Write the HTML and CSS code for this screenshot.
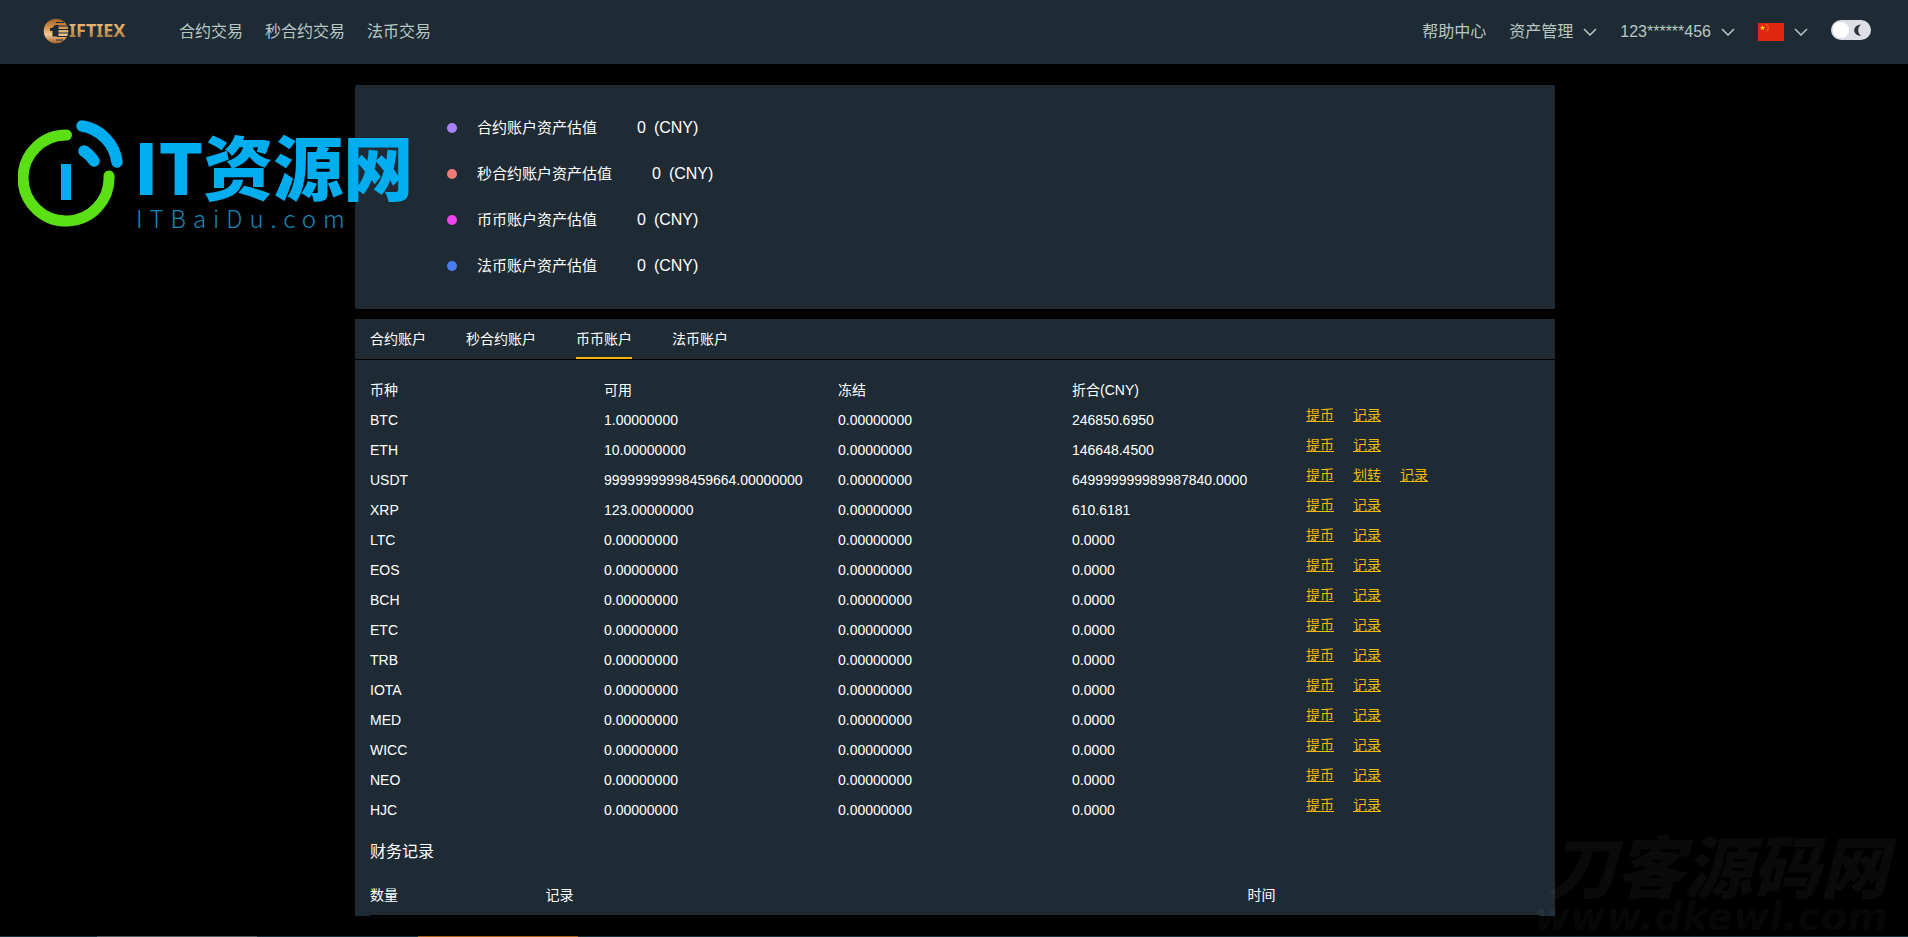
FILE: index.html
```html
<!DOCTYPE html>
<html lang="zh-CN">
<head>
<meta charset="utf-8">
<meta name="viewport" content="width=device-width, initial-scale=1">
<title>IFTIEX</title>
<link rel="stylesheet" href="styles.css">
</head>
<body>
<header class="header">
  <a class="brand" href="#" aria-label="IFTIEX">
    <svg width="84" height="26" viewBox="0 0 84 26">
      <defs>
        <linearGradient id="gold" x1="0" y1="0" x2="0" y2="1"><stop offset="0" stop-color="#efc780"/><stop offset=".5" stop-color="#d9a45c"/><stop offset="1" stop-color="#8c6135"/></linearGradient>
        <linearGradient id="coin" x1="0" y1="0" x2="0" y2="1"><stop offset="0" stop-color="#9a602e"/><stop offset=".3" stop-color="#d08a42"/><stop offset=".65" stop-color="#f3c98e"/><stop offset="1" stop-color="#a3632c"/></linearGradient>
      </defs>
      <circle cx="13" cy="13" r="12.300" fill="url(#coin)"/>
      <path d="M7 10h2l3-3h3.500v11.500H9.500V13H7z" fill="#1f2b34"/>
      <path d="M13 4.500h8M14 8h10M14 11.500h12M14 15h12M14 18.500h10M13 22h7" stroke="#1f2b34" stroke-width="1.200"/>
      <text class="brand-text" x="26" y="19" fill="url(#gold)">IFTIEX</text>
    </svg>
  </a>
  <nav class="nav">
    <a href="#">合约交易</a>
    <a href="#">秒合约交易</a>
    <a href="#">法币交易</a>
  </nav>
  <div class="tools">
    <a href="#">帮助中心</a>
    <button type="button">资产管理<svg class="chev" width="14" height="8" viewBox="0 0 14 8"><path d="M1 1l6 6 6-6"/></svg></button>
    <button type="button">123******456<svg class="chev" width="14" height="8" viewBox="0 0 14 8"><path d="M1 1l6 6 6-6"/></svg></button>
    <button class="lang" type="button" aria-label="语言"><svg width="26" height="18" viewBox="0 0 26 18"><path fill="#de2910" d="M0 0h26v18H0z"/><path fill="#ffde00" d="M4.500 2.300l.7 1.700 1.800.1-1.400 1.100.5 1.800-1.600-1-1.500 1 .4-1.800L2 4.100l1.800-.1z"/><path fill="none" stroke="#e8820c" stroke-width="1.300" stroke-dasharray="1.500 1.200" d="M8 1.500c3 1.500 3 5 0 7"/></svg><svg class="chev" width="14" height="8" viewBox="0 0 14 8"><path d="M1 1l6 6 6-6"/></svg></button>
    <label class="switch">
      <input type="checkbox" aria-label="夜间模式">
      <svg width="40" height="20" viewBox="0 0 40 20"><rect width="40" height="20" rx="10" fill="#dcdfe6"/><circle cx="10" cy="10" r="8" fill="#fff"/><path d="M30 4.500c-9 1-9 10.500 0 11.500-3.700-3-3.700-8.500 0-11.500z" fill="#303133"/></svg>
    </label>
  </div>
</header>

<main class="main">
  <section class="card summary">
    <dl>
      <div class="sum"><dt class="violet">合约账户资产估值</dt><dd><span>0</span><span>(CNY)</span></dd></div>
      <div class="sum"><dt class="coral">秒合约账户资产估值</dt><dd><span>0</span><span>(CNY)</span></dd></div>
      <div class="sum"><dt class="pink">币币账户资产估值</dt><dd><span>0</span><span>(CNY)</span></dd></div>
      <div class="sum"><dt class="blue">法币账户资产估值</dt><dd><span>0</span><span>(CNY)</span></dd></div>
    </dl>
  </section>

  <section class="card">
    <div class="tabs">
      <button type="button">合约账户</button>
      <button type="button">秒合约账户</button>
      <button type="button" class="active">币币账户</button>
      <button type="button">法币账户</button>
    </div>
    <div class="body">
      <table class="assets">
        <thead><tr><th>币种</th><th>可用</th><th>冻结</th><th>折合(CNY)</th><th></th></tr></thead>
        <tbody>
          <tr><td>BTC</td><td>1.00000000</td><td>0.00000000</td><td>246850.6950</td><td class="ops"><a href="#">提币</a><a href="#">记录</a></td></tr>
          <tr><td>ETH</td><td>10.00000000</td><td>0.00000000</td><td>146648.4500</td><td class="ops"><a href="#">提币</a><a href="#">记录</a></td></tr>
          <tr><td>USDT</td><td>99999999998459664.00000000</td><td>0.00000000</td><td>649999999989987840.0000</td><td class="ops"><a href="#">提币</a><a href="#">划转</a><a href="#">记录</a></td></tr>
          <tr><td>XRP</td><td>123.00000000</td><td>0.00000000</td><td>610.6181</td><td class="ops"><a href="#">提币</a><a href="#">记录</a></td></tr>
          <tr><td>LTC</td><td>0.00000000</td><td>0.00000000</td><td>0.0000</td><td class="ops"><a href="#">提币</a><a href="#">记录</a></td></tr>
          <tr><td>EOS</td><td>0.00000000</td><td>0.00000000</td><td>0.0000</td><td class="ops"><a href="#">提币</a><a href="#">记录</a></td></tr>
          <tr><td>BCH</td><td>0.00000000</td><td>0.00000000</td><td>0.0000</td><td class="ops"><a href="#">提币</a><a href="#">记录</a></td></tr>
          <tr><td>ETC</td><td>0.00000000</td><td>0.00000000</td><td>0.0000</td><td class="ops"><a href="#">提币</a><a href="#">记录</a></td></tr>
          <tr><td>TRB</td><td>0.00000000</td><td>0.00000000</td><td>0.0000</td><td class="ops"><a href="#">提币</a><a href="#">记录</a></td></tr>
          <tr><td>IOTA</td><td>0.00000000</td><td>0.00000000</td><td>0.0000</td><td class="ops"><a href="#">提币</a><a href="#">记录</a></td></tr>
          <tr><td>MED</td><td>0.00000000</td><td>0.00000000</td><td>0.0000</td><td class="ops"><a href="#">提币</a><a href="#">记录</a></td></tr>
          <tr><td>WICC</td><td>0.00000000</td><td>0.00000000</td><td>0.0000</td><td class="ops"><a href="#">提币</a><a href="#">记录</a></td></tr>
          <tr><td>NEO</td><td>0.00000000</td><td>0.00000000</td><td>0.0000</td><td class="ops"><a href="#">提币</a><a href="#">记录</a></td></tr>
          <tr><td>HJC</td><td>0.00000000</td><td>0.00000000</td><td>0.0000</td><td class="ops"><a href="#">提币</a><a href="#">记录</a></td></tr>
        </tbody>
      </table>
      <h2 class="subtitle">财务记录</h2>
      <table class="records">
        <thead><tr><th class="amount">数量</th><th class="note">记录</th><th>时间</th></tr></thead>
      </table>
    </div>
  </section>
</main>

<div class="strip"><i class="strip-gray"></i><i class="strip-orange"></i></div>

<div class="site-mark">
  <svg width="106" height="108" viewBox="0 0 106 108" fill="none" stroke-linecap="round">
    <path d="M48.500 16A43 43 0 1 0 91 57" stroke="#5be016" stroke-width="11"/>
    <path d="M64 7A42 42 0 0 1 99 43" stroke="#00adef" stroke-width="11.500"/>
    <path d="M66 32Q71 35 76 42" stroke="#00adef" stroke-width="11.500"/>
    <path d="M48 45v36" stroke="#00adef" stroke-width="10" stroke-linecap="butt"/>
  </svg>
  <div class="site-name">
    <strong>IT资源网</strong>
    <span>ITBaiDu.com</span>
  </div>
</div>

<div class="corner-mark">
  <strong>刀客源码网</strong>
  <span>www.dkewl.com</span>
</div>
</body>
</html>
```

FILE: styles.css
```css
* { box-sizing: border-box; }

body {
  margin: 0;
  min-height: 100vh;
  display: flex;
  flex-direction: column;
  position: relative;
  overflow-x: hidden;
  background: #000;
  color: #fff;
  font: 14px/30px "Liberation Sans", "Noto Sans CJK SC", sans-serif;
}

a { color: inherit; text-decoration: none; }

button {
  padding: 0;
  border: 0;
  background: none;
  color: inherit;
  font: inherit;
  cursor: pointer;
}

.header {
  display: flex;
  align-items: center;
  height: 64px;
  padding: 0 37px 0 43px;
  background: #1f2b34;
  color: #b7c8c4;
  font-size: 16px;
}

.brand { display: flex; margin: 0 52px 2px 0; }
.brand-text { font: bold 18px "Noto Sans", sans-serif; }
.nav { display: flex; gap: 22px; }
.tools { display: flex; align-items: center; gap: 23px; margin-left: auto; }
.tools button { display: flex; align-items: center; gap: 10px; }
.chev { fill: none; stroke: #b7c8c4; stroke-width: 1.5; }

.switch { display: flex; margin-bottom: 4px; cursor: pointer; }
.switch input { position: absolute; opacity: 0; }

.main { padding: 21px 0 20px 2px; }

.card {
  max-width: 1200px;
  margin: 0 auto 10px;
  border-radius: 2px;
  background: #1f2b34;
}
.card:last-child { margin-bottom: 0; border-radius: 0; }

.summary { padding: 20px 92px; font-size: 15px; }
.summary dl { margin: 0; }
.sum { display: flex; gap: 40px; line-height: 46px; }
.sum dt { display: flex; align-items: center; gap: 20px; }
.sum dt::before {
  content: "";
  width: 10px;
  height: 10px;
  border-radius: 50%;
  background: currentColor;
}
.sum dd { display: flex; gap: 8px; margin: 0; font-size: 16px; }
.violet::before { color: #a980f8; }
.coral::before { color: #ed7b77; }
.pink::before { color: #f044ee; }
.blue::before { color: #4a7cf2; }

.tabs {
  display: flex;
  gap: 40px;
  padding: 0 15px;
  border-bottom: 1px solid #000;
}
.tabs button {
  height: 40px;
  padding-top: 2px;
  border-bottom: 2px solid transparent;
  line-height: 36px;
}
.tabs .active { border-bottom-color: #f0b90b; }

.body { padding: 15px 15px 0; }

table { width: 100%; table-layout: fixed; border-spacing: 0; }
th, td { height: 30px; padding: 0; text-align: left; font-weight: 400; }

.assets .ops { vertical-align: top; line-height: 20px; }
.ops a { margin-right: 19px; color: #f0b90b; text-decoration: underline; }

.subtitle {
  margin: 12px 0 0;
  font-size: 16px;
  font-weight: 400;
  line-height: 30px;
}

.records { margin-top: 8px; }
.records th { height: 41px; padding-bottom: 1px; border-bottom: 1px solid #000; }
.records .amount { width: 15%; }
.records .note { width: 60%; }

.strip {
  display: flex;
  gap: 161px;
  height: 1px;
  margin-top: auto;
  padding-left: 97px;
  background: #1c3340;
}
.strip i { width: 160px; }
.strip-gray { background: #4f5c60; }
.strip-orange { background: #a8661f; }

.site-mark {
  position: absolute;
  top: 119px;
  left: 18px;
  display: flex;
  gap: 10px;
  color: #00adef;
  pointer-events: none;
}
.site-name { display: flex; flex-direction: column; gap: 8px; padding-top: 14px; }
.site-name strong {
  font: 900 70px/64px "Noto Sans CJK SC", sans-serif;
}
.site-name span {
  padding-left: 2px;
  color: #1488b8;
  font: 300 24px/26px "Noto Sans CJK SC", sans-serif;
  letter-spacing: 7px;
}

.corner-mark {
  position: absolute;
  right: 20px;
  bottom: 2px;
  display: flex;
  flex-direction: column;
  gap: 3px;
  align-items: flex-end;
  color: rgba(255, 255, 255, 0.04);
  pointer-events: none;
}
.corner-mark strong { font: italic 900 68px/64px "Noto Sans CJK SC", sans-serif; }
.corner-mark span { font: italic bold 39px/36px "DejaVu Sans", sans-serif; }
```
